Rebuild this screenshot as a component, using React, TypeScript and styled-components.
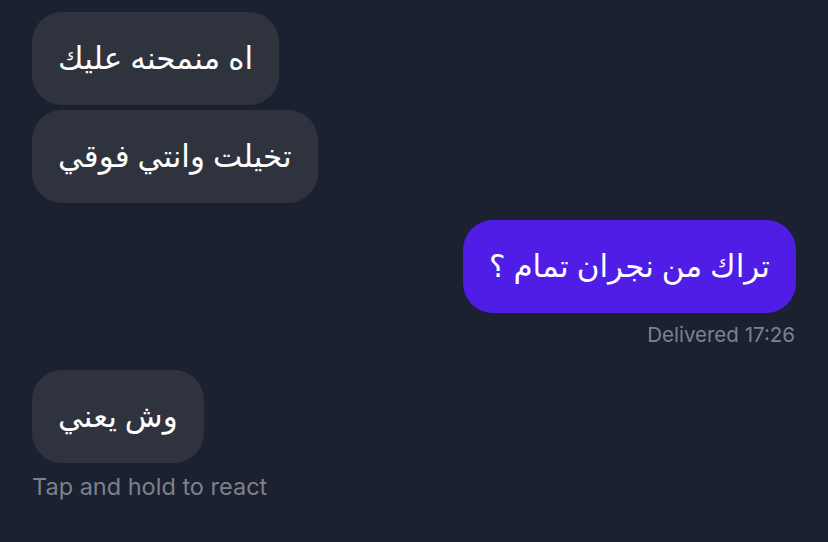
import React from "react";
import styled, { createGlobalStyle } from "styled-components";

const Global = createGlobalStyle`
  html, body { margin: 0; padding: 0; background: #1b2130; }
  body { width: 828px; height: 542px; overflow: hidden; }
`;

const Thread = styled.div`
  width: 828px;
  height: 542px;
  box-sizing: border-box;
  padding: 12px 32px 0 32px;
  display: flex;
  flex-direction: column;
  background: #1b2130;
  font-family: "Noto Sans", "DejaVu Sans", sans-serif;
`;

const Row = styled.div<{ $mine?: boolean; $gap?: number }>`
  display: flex;
  justify-content: ${(p) => (p.$mine ? "flex-end" : "flex-start")};
  margin-top: ${(p) => p.$gap ?? 0}px;
`;

const Bubble = styled.div<{ $mine?: boolean }>`
  direction: rtl;
  height: 93px;
  box-sizing: border-box;
  display: flex;
  align-items: center;
  padding: 0 26px 4px;
  border-radius: 30px;
  background: ${(p) => (p.$mine ? "#4f1de6" : "#2f333e")};
  color: #ffffff;
  font-size: 31px;
  white-space: nowrap;
`;

const Meta = styled.div<{ $mine?: boolean; $gap?: number; $size: number }>`
  color: #7d818b;
  font-family: Inter, "Liberation Sans", sans-serif;
  font-size: ${(p) => p.$size}px;
  text-align: ${(p) => (p.$mine ? "right" : "left")};
  margin-top: ${(p) => p.$gap ?? 0}px;
  padding-right: ${(p) => (p.$mine ? 1 : 0)}px;
  line-height: 24px;
`;

export default function App() {
  return (
    <>
      <Global />
      <Thread>
        <Row>
          <Bubble>اه منمحنه عليك</Bubble>
        </Row>
        <Row $gap={5}>
          <Bubble>تخيلت وانتي فوقي</Bubble>
        </Row>
        <Row $mine $gap={17}>
          <Bubble $mine>تراك من نجران تمام ؟</Bubble>
        </Row>
        <Meta $mine $gap={10} $size={20.5}>Delivered 17:26</Meta>
        <Row $gap={23}>
          <Bubble>وش يعني</Bubble>
        </Row>
        <Meta $gap={12} $size={23.5}>Tap and hold to react</Meta>
      </Thread>
    </>
  );
}
